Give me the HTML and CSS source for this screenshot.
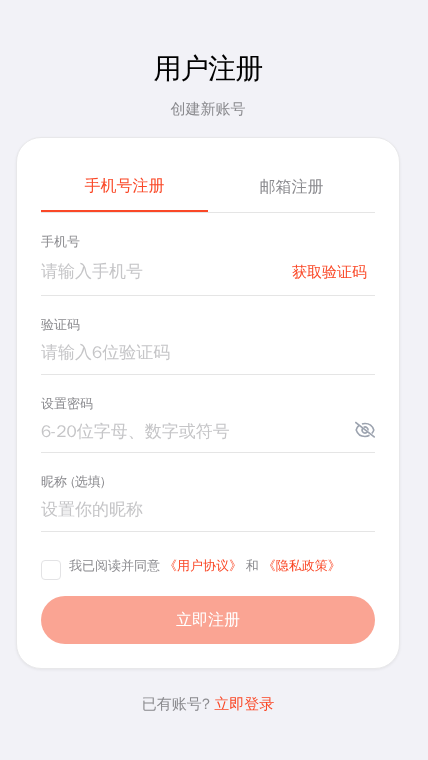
FILE: index.html
```html
<!DOCTYPE html>
<html lang="zh-CN">
<head>
<meta charset="UTF-8">
<meta name="viewport" content="width=device-width, initial-scale=1">
<title>用户注册</title>
<link rel="stylesheet" href="styles.css">
</head>
<body>
<main class="page">
  <header class="header">
    <h1 class="title">用户注册</h1>
    <p class="subtitle">创建新账号</p>
  </header>
  <form class="card">
    <div class="tabs">
      <button type="button" class="tab tab-active">手机号注册</button>
      <button type="button" class="tab">邮箱注册</button>
    </div>
    <div class="field field-phone">
      <label class="label" for="phone">手机号</label>
      <div class="row">
        <input class="input" id="phone" type="tel" placeholder="请输入手机号">
        <button type="button" class="code-button">获取验证码</button>
      </div>
    </div>
    <div class="field">
      <label class="label" for="code">验证码</label>
      <div class="row"><input class="input" id="code" type="text" placeholder="请输入6位验证码"></div>
    </div>
    <div class="field">
      <label class="label" for="password">设置密码</label>
      <div class="row">
        <input class="input input-password" id="password" type="password" placeholder="6-20位字母、数字或符号">
        <svg class="eye" viewBox="0 0 20 20" fill="none" stroke="currentColor" stroke-width="1.6">
          <path d="M4.2 5.2C2.8 6.5 1.7 8.2 1.2 10C2.5 14 5.8 16.5 10 16.5C11.7 16.5 13.2 16.1 14.5 15.3M7 4C8 3.6 9 3.5 10 3.5C14.2 3.5 17.5 6 18.8 10C18.4 11.3 17.7 12.5 16.8 13.5"/>
          <path d="M7.8 8C6.2 10.3 7.5 13.1 10 13.1C11 13.1 11.8 12.7 12.4 12M8.7 7.2C11 6.2 13.4 8 13.1 10.5"/>
          <path d="M.3 2.2L19.8 17.3"/>
        </svg>
      </div>
    </div>
    <div class="field">
      <label class="label" for="nickname">昵称 (选填)</label>
      <div class="row"><input class="input" id="nickname" type="text" placeholder="设置你的昵称"></div>
    </div>
    <div class="agreement">
      <input class="checkbox" id="agree" type="checkbox">
      <label class="agreement-text" for="agree">我已阅读并同意 <a class="link">《用户协议》</a> 和 <a class="link">《隐私政策》</a></label>
    </div>
    <button type="button" class="submit">立即注册</button>
  </form>
  <p class="footer">已有账号? <a class="link">立即登录</a></p>
</main>
</body>
</html>
```
FILE: styles.css
```css
* { box-sizing: border-box; }
body {
  margin: 0;
  background: #f2f2f7;
  color: #8a8a8e;
  font-family: "WenQuanYi Zen Hei", "Droid Sans Fallback", "Liberation Sans", sans-serif;
}
button, input { font-family: inherit; margin: 0; padding: 0; border: 0; background: none; }
.page { width: 416px; height: 760px; padding: 48px 16px 0; overflow: hidden; }
.header { height: 89px; text-align: center; }
.title { margin: 0; font-size: 28px; line-height: 42px; font-weight: 400; letter-spacing: -0.8px; color: #000; }
.subtitle { margin: 8px 0 0; font-size: 15px; line-height: 22px; }
.card {
  height: 532px;
  padding: 24px;
  border: 1px solid #e8e8ea;
  border-radius: 25px;
  background: #fff;
  box-shadow: 0 1px 3px rgba(0, 0, 0, 0.06);
}
.tabs { display: flex; height: 51px; border-bottom: 1px solid #e5e5e5; }
.tab { flex: 1; height: 50px; font-size: 16px; color: #8a8a8e; }
.tab-active { color: #fa4827; border-bottom: 2px solid #fa4827; }
.field { height: 78.5px; padding-top: 20px; border-bottom: 1px solid #e5e5e5; }
.field-phone { height: 83px; }
.label { display: block; font-size: 13px; line-height: 18px; }
.row { display: flex; align-items: center; height: 38px; }
.field-phone .row { height: 42px; }
.input { flex: 1; min-width: 0; height: 30px; padding-bottom: 2px; font-size: 17px; outline: 0; }
.input-password { padding-bottom: 0; }
.input::placeholder { color: #c5c5c7; opacity: 1; }
.code-button { width: 91px; padding-right: 8px; text-align: right; font-size: 15px; color: #fa4827; }
.eye { width: 20px; height: 20px; color: #9ca3af; position: relative; top: -2px; }
.agreement { display: flex; height: 64px; padding-top: 24px; gap: 8px; }
.checkbox { appearance: none; width: 20px; height: 20px; margin-top: 4px; border: 1px solid #e3e3e5; border-radius: 4px; }
.agreement-text { font-size: 13px; line-height: 20px; white-space: nowrap; }
.link { color: #fa4827; }
.submit { width: 100%; height: 48px; padding-top: 2px; border-radius: 24px; background: #faa493; color: #fff; font-size: 16px; }
.footer { margin: 24px 0 0; text-align: center; font-size: 15px; line-height: 22px; }
```
